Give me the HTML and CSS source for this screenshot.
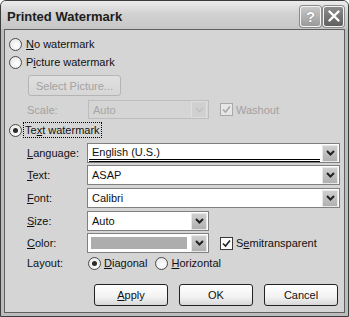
FILE: index.html
```html
<!DOCTYPE html>
<html lang="en">
<head>
    <meta charset="UTF-8">
    <title>Printed Watermark</title>
    <link rel="stylesheet" href="styles.css">
</head>
<body>

    <div class="window">
        <!-- Title bar -->
        <div class="titlebar">
            <span class="title">Printed Watermark</span>
            <div class="title-buttons">
                <span class="tb-btn help">?</span>
                <span class="tb-btn close">
                    <svg width="12" height="12" viewBox="0 0 12 12"><path d="M1.5 1.5 L10.5 10.5 M10.5 1.5 L1.5 10.5" stroke="#fff" stroke-width="2.4" stroke-linecap="round"/></svg>
                </span>
            </div>
        </div>

        <div class="frame">
            <div class="client">

                <div class="row row-no">
                    <span class="radio"></span>
                    <span class="opt-text"><u>N</u>o watermark</span>
                </div>

                <div class="row row-picture">
                    <span class="radio"></span>
                    <span class="opt-text">P<u>i</u>cture watermark</span>
                </div>

                <div class="row row-select">
                    <span class="btn disabled">Select Picture...</span>
                </div>

                <div class="row row-scale">
                    <span class="label disabled-text">Scale:</span>
                    <div class="combo combo-small disabled">
                        <span class="combo-value">Auto</span>
                        <span class="drop"><svg width="9" height="6" viewBox="0 0 9 6"><path d="M1 1 L4.5 4.5 L8 1" fill="none" stroke="#c4c4c4" stroke-width="2"/></svg></span>
                    </div>
                    <span class="check disabled"><svg width="9" height="9" viewBox="0 0 9 9"><path d="M1 4.5 L3.5 7 L8 1.5" fill="none" stroke="#a8a8a8" stroke-width="1.6"/></svg></span>
                    <span class="disabled-text">Washout</span>
                </div>

                <div class="row row-text">
                    <span class="radio checked"></span>
                    <span class="opt-text focus">Te<u>x</u>t watermark</span>
                </div>

                <div class="row field-row first">
                    <span class="label"><u>L</u>anguage:</span>
                    <div class="combo combo-wide">
                        <span class="combo-value underlined">English (U.S.)</span>
                        <span class="drop"><svg width="9" height="6" viewBox="0 0 9 6"><path d="M1 1 L4.5 4.5 L8 1" fill="none" stroke="#222" stroke-width="2"/></svg></span>
                    </div>
                </div>

                <div class="row field-row">
                    <span class="label"><u>T</u>ext:</span>
                    <div class="combo combo-wide">
                        <span class="combo-value">ASAP</span>
                        <span class="drop"><svg width="9" height="6" viewBox="0 0 9 6"><path d="M1 1 L4.5 4.5 L8 1" fill="none" stroke="#222" stroke-width="2"/></svg></span>
                    </div>
                </div>

                <div class="row field-row">
                    <span class="label"><u>F</u>ont:</span>
                    <div class="combo combo-wide">
                        <span class="combo-value">Calibri</span>
                        <span class="drop"><svg width="9" height="6" viewBox="0 0 9 6"><path d="M1 1 L4.5 4.5 L8 1" fill="none" stroke="#222" stroke-width="2"/></svg></span>
                    </div>
                </div>

                <div class="row field-row">
                    <span class="label"><u>S</u>ize:</span>
                    <div class="combo combo-small">
                        <span class="combo-value">Auto</span>
                        <span class="drop"><svg width="9" height="6" viewBox="0 0 9 6"><path d="M1 1 L4.5 4.5 L8 1" fill="none" stroke="#222" stroke-width="2"/></svg></span>
                    </div>
                </div>

                <div class="row field-row">
                    <span class="label"><u>C</u>olor:</span>
                    <div class="combo combo-small">
                        <span class="combo-value"><span class="swatch"></span></span>
                        <span class="drop"><svg width="9" height="6" viewBox="0 0 9 6"><path d="M1 1 L4.5 4.5 L8 1" fill="none" stroke="#222" stroke-width="2"/></svg></span>
                    </div>
                    <span class="check"><svg width="9" height="9" viewBox="0 0 9 9"><path d="M1 4.5 L3.5 7 L8 1.5" fill="none" stroke="#222" stroke-width="1.6"/></svg></span>
                    <span>S<u>e</u>mitransparent</span>
                </div>

                <div class="row row-layout">
                    <span class="label">Layout:</span>
                    <span class="radio checked"></span>
                    <span class="opt-text"><u>D</u>iagonal</span>
                    <span class="radio horizontal"></span>
                    <span class="opt-text"><u>H</u>orizontal</span>
                </div>

                <div class="row row-buttons">
                    <span class="btn action"><u>A</u>pply</span>
                    <span class="btn action">OK</span>
                    <span class="btn action">Cancel</span>
                </div>

            </div>
        </div>
    </div>

</body>
</html>
```

FILE: styles.css
```css
body {
    margin: 0;
    padding: 0;
    background-color: #ffffff;
    font-family: "Liberation Sans", Arial, sans-serif;
    font-size: 11px;
    color: #111;
}

.window {
    width: 349px;
    height: 317px;
    box-sizing: border-box;
    border: 1px solid #3c3c3c;
    border-radius: 6px 6px 0 0;
    background-color: #bcbcbc;
    display: flex;
    flex-direction: column;
    overflow: hidden;
}

/* Title bar */
.titlebar {
    height: 28px;
    display: flex;
    align-items: center;
    justify-content: space-between;
    padding: 0 4px 0 6px;
    background: linear-gradient(#ececec, #d2d2d2 45%, #c6c6c6);
}

.title {
    font-size: 13px;
    font-weight: bold;
    color: #1c1c1c;
    margin-top: 2px;
}

.title-buttons {
    display: flex;
    gap: 2px;
    margin-top: 2px;
}

.tb-btn {
    width: 19px;
    height: 19px;
    border: 1px solid #f4f4f4;
    border-radius: 3px;
    display: flex;
    align-items: center;
    justify-content: center;
    box-shadow: 0 0 0 1px #8a8a8a;
}

.help {
    background: linear-gradient(#c8c8c8, #9a9a9a);
    color: #fff;
    font-size: 15px;
    font-weight: bold;
    text-shadow: 0 0 1px #555;
}

.close {
    background: linear-gradient(#8c8c8c, #606060);
}

/* Frame and client area */
.frame {
    flex: 1;
    padding: 0 3px 3px 3px;
    display: flex;
}

.client {
    flex: 1;
    border: 1px solid #5e5e5e;
    background-color: #d5d5d5;
    padding: 0 4px;
    display: flex;
    flex-direction: column;
}

.row {
    display: flex;
    align-items: center;
    height: 16px;
}

.row-no { margin-top: 6px; }
.row-picture { margin-top: 2px; }

.row-select {
    margin-top: 5px;
    height: 21px;
    padding-left: 19px;
}

.row-scale {
    margin-top: 4px;
    height: 19px;
}

.row-text { margin-top: 3px; }

.field-row {
    height: 20px;
    margin-top: 2px;
}

.field-row.first { margin-top: 5px; }
.field-row:nth-child(8),
.field-row:nth-child(9) { margin-top: 3px; }

.row-layout { margin-top: 2px; }

.row-buttons {
    margin-top: 13px;
    height: 22px;
    justify-content: flex-end;
    gap: 11px;
    padding-right: 2px;
}

/* Radio buttons */
.radio {
    width: 11px;
    height: 11px;
    border: 1px solid #4a4a4a;
    border-radius: 50%;
    background: radial-gradient(circle at 60% 60%, #ffffff, #e2e2e2);
    position: relative;
    flex-shrink: 0;
}

.radio.checked::after {
    content: "";
    position: absolute;
    left: 3px;
    top: 3px;
    width: 5px;
    height: 5px;
    border-radius: 50%;
    background-color: #2a2a2a;
}

.opt-text {
    margin-left: 4px;
}

.focus {
    outline: 1px dotted #000;
    outline-offset: 0;
    padding: 0 1px;
    margin-left: 2px;
    line-height: 14px;
}

.row-layout .radio {
    margin-left: 1px;
}

.row-layout .horizontal {
    margin-left: 8px;
}

.row-layout .opt-text {
    margin-left: 3px;
}

/* Labels and combos */
.label {
    width: 60px;
    padding-left: 18px;
    flex-shrink: 0;
}

.disabled-text {
    color: #a2a2a2;
}

.combo {
    box-sizing: border-box;
    height: 20px;
    border: 1px solid #808080;
    background-color: #fff;
    display: flex;
    align-items: center;
    padding: 1px;
}

.combo-wide { width: 253px; }
.combo-small { width: 122px; }

.row-scale .combo {
    height: 19px;
    margin-left: 1px;
    width: 121px;
}

.combo.disabled {
    border-color: #bdbdbd;
    background-color: #d5d5d5;
    color: #a6a6a6;
}

.combo-value {
    flex: 1;
    padding-left: 3px;
    height: 16px;
    display: flex;
    align-items: center;
}

.underlined {
    box-sizing: border-box;
    padding-top: 1px;
    border-bottom: 3px double #000;
    margin-right: 2px;
    height: 17px;
    padding-bottom: 1px;
}

.swatch {
    width: 96px;
    height: 12px;
    background-color: #adadad;
    margin-left: -1px;
}

.drop {
    width: 14px;
    height: 15px;
    border: 1px solid #e8e8e8;
    background: linear-gradient(#cfcfcf, #b0b0b0);
    display: flex;
    align-items: center;
    justify-content: center;
    box-sizing: content-box;
}

.combo.disabled .drop {
    background: #d0d0d0;
    border-color: #dedede;
}

/* Checkboxes */
.check {
    width: 11px;
    height: 11px;
    border: 1px solid #3a3a3a;
    background-color: #fbfbfb;
    display: flex;
    align-items: center;
    justify-content: center;
    margin-left: 11px;
    margin-right: 3px;
}

.check.disabled {
    border-color: #a8a8a8;
    background-color: #e6e6e6;
}

/* Buttons */
.btn {
    box-sizing: border-box;
    display: flex;
    align-items: center;
    justify-content: center;
    border-radius: 3px;
}

.btn.disabled {
    width: 93px;
    height: 21px;
    border: 1px solid #b4b4b4;
    background: linear-gradient(#e0e0e0, #d6d6d6);
    color: #a2a2a2;
}

.btn.action {
    width: 74px;
    height: 22px;
    border: 1px solid #222;
    background: linear-gradient(#ffffff, #f2f2f2 60%, #d8d8d8);
    color: #111;
}
```
